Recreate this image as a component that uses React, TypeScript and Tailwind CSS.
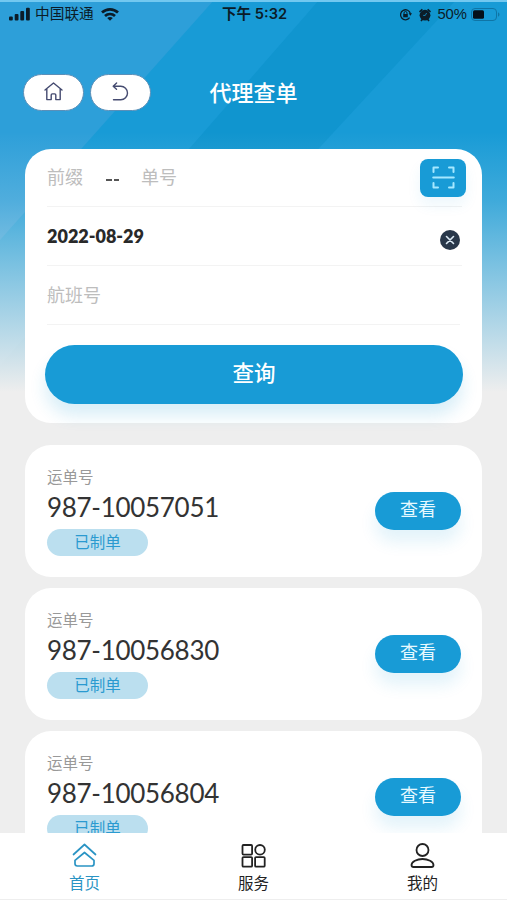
import React from 'react';

interface Waybill {
  prefix: string;
  number: string;
  status: string;
}

const waybills: Waybill[] = [
  { prefix: '987', number: '10057051', status: '已制单' },
  { prefix: '987', number: '10056830', status: '已制单' },
  { prefix: '987', number: '10056804', status: '已制单' },
];

const Backdrop = () => (
  <svg className="absolute inset-x-0 top-0 h-[400px] w-full" viewBox="0 0 507 400" preserveAspectRatio="none">
    <defs>
      <linearGradient id="fade" x1="0" y1="0" x2="0" y2="1">
        <stop offset="0.33" stopColor="#eeeeee" stopOpacity="0" />
        <stop offset="0.5" stopColor="#eeeeee" stopOpacity="0.18" />
        <stop offset="0.65" stopColor="#eeeeee" stopOpacity="0.44" />
        <stop offset="0.85" stopColor="#eeeeee" stopOpacity="0.78" />
        <stop offset="0.98" stopColor="#eeeeee" stopOpacity="1" />
      </linearGradient>
    </defs>
    <rect width="507" height="400" fill="#189bd6" />
    <path d="M0 0H214L0 240Z" fill="#2d9fd9" />
    <path d="M319 0H456L86 400H-30Z" fill="#1095cf" />
    <rect width="507" height="400" fill="url(#fade)" />
    <rect width="507" height="2" fill="#72c8f0" />
  </svg>
);

const StatusBar = () => (
  <div className="grid h-[28px] grid-cols-[1fr_auto_1fr] items-center pt-[1px] pr-[7px] pl-[9px] text-[14px] text-[#0b1c28]">
    <div className="flex items-center">
      <svg className="h-[14px] w-[21px]" viewBox="0 0 21 14" fill="currentColor">
        <rect x="0" y="9.5" width="3.8" height="4" rx="1" />
        <rect x="5.7" y="7" width="3.8" height="6.5" rx="1" />
        <rect x="11.3" y="4" width="3.8" height="9.5" rx="1" />
        <rect x="17" y="0.8" width="3.8" height="12.7" rx="1" />
      </svg>
      <span className="ml-[5px] text-[14.7px]">中国联通</span>
      <svg className="ml-[7px] h-[13px] w-[18px]" viewBox="0 0 18 13" fill="none" stroke="currentColor" strokeWidth="2.7">
        <path d="M1 4.6C5.6.3 12.4.3 17 4.6" />
        <path d="M4 8C6.8 5.3 11.2 5.3 14 8" />
        <path d="M6.2 9.9C7.8 8.6 10.2 8.6 11.8 9.9L9 12.8Z" fill="currentColor" stroke="none" />
      </svg>
    </div>
    <span className="text-[14.6px] font-semibold">下午 5:32</span>
    <div className="flex items-center justify-end">
      <svg className="h-[13px] w-[13px]" viewBox="0 0 13 13" fill="none" stroke="currentColor">
        <path d="M10.6 9.7A5 5 0 1 1 11.4 5.6" strokeWidth="1.3" />
        <path d="M9.7 5.2H13L11.4 7.7Z" fill="currentColor" stroke="none" />
        <rect x="4.2" y="6" width="4.6" height="3.3" fill="currentColor" stroke="none" />
        <path d="M5 6V5A1.5 1.5 0 0 1 8 5V6" />
      </svg>
      <svg className="ml-[7px] h-[14px] w-[12px]" viewBox="0 0 12 14">
        <path d="M0 3.2 2.8.7 4 2.1.9 4.6ZM12 3.2 9.2.7 8 2.1 11.1 4.6Z" fill="currentColor" />
        <path d="m2 13 2-2.4M10 13 8 10.6" stroke="currentColor" strokeWidth="1.6" />
        <circle cx="6" cy="7.2" r="5.4" fill="currentColor" />
        <path d="M6.2 7.5 7.6 5M6.2 7.4H4.2" stroke="#189bd6" strokeWidth="0.8" />
      </svg>
      <span className="ml-[6px] font-['Liberation_Sans'] text-[14.8px]">50%</span>
      <svg className="ml-[4px] h-[13px] w-[29px]" viewBox="0 0 29 13">
        <rect x="0.5" y="0.5" width="25" height="12" rx="3.5" fill="none" stroke="#0f75a6" />
        <rect x="2" y="2.2" width="11" height="8.6" rx="1.5" fill="#051019" />
        <path d="M27 4.3C29 5.2 29 7.8 27 8.7Z" fill="#0f75a6" />
      </svg>
    </div>
  </div>
);

const Header = () => (
  <header className="grid h-[121px] grid-cols-[1fr_auto_1fr] items-start px-[23px] pt-[46px]">
    <div className="flex gap-[6px]">
      <button className="flex h-[37px] w-[61px] items-center justify-center rounded-full border border-[#5b8fb8] bg-white text-[#454b70]">
        <svg className="mb-[2px] h-[19px] w-[19px]" viewBox="0 0 19 19" fill="none" stroke="currentColor" strokeWidth="1.4" strokeLinecap="round" strokeLinejoin="round">
          <path d="M1 8 9.5 1 18 8M2.8 6.7V17.6H7.2V13Q7.2 11.9 8.3 11.9H10.7Q11.8 11.9 11.8 13V17.6H16.2V6.7" />
        </svg>
      </button>
      <button className="flex h-[37px] w-[61px] items-center justify-center rounded-full border border-[#5b8fb8] bg-white text-[#454b70]">
        <svg className="mb-[2px] h-[19px] w-[17px]" viewBox="0 0 17 19" fill="none" stroke="currentColor" strokeWidth="1.4" strokeLinecap="round" strokeLinejoin="round">
          <path d="M4.6 1 1.2 4.3 4.5 7.3M1.5 4.3H8.8A6.7 6.7 0 0 1 8.8 17.7H1.5" />
        </svg>
      </button>
    </div>
    <h1 className="pt-[3px] text-[22px] leading-[32px] font-medium text-white">代理查单</h1>
  </header>
);

const SearchCard = () => (
  <section className="mx-[25px] h-[274px] rounded-[26px] bg-white px-[20px]">
    <div className="ml-[2px] flex h-[58px] items-center border-b border-[#f3f3f3] text-[18px] text-[#bdbdbd]">
      <span className="w-[59px]">前缀</span>
      <span className="flex w-[35px] gap-[2px] pt-[4px]">
        <i className="h-[2px] w-[5.5px] bg-[#555]" />
        <i className="h-[2px] w-[5.5px] bg-[#555]" />
      </span>
      <span>单号</span>
      <button className="mr-[-4px] ml-auto flex h-[38px] w-[46px] items-center justify-center rounded-[8px] bg-[#189bd6] shadow-[0_8px_14px_rgba(24,155,214,0.08)]">
        <svg className="h-[23px] w-[23px]" viewBox="0 0 23 23" fill="none" stroke="#a5e8ff" strokeWidth="2" strokeLinecap="round" strokeLinejoin="round">
          <path d="M1.5 6V1.5H6M17 1.5H21.5V6M1.5 17V21.5H6M17 21.5H21.5V17M1.2 11.5H21.8" />
        </svg>
      </button>
    </div>
    <div className="ml-[2px] flex h-[59px] items-center justify-between border-b border-[#f3f3f3]">
      <span className="font-[Lato] text-[18px] font-extrabold text-[#292929]">2022-08-29</span>
      <svg className="mt-[7px] mr-[2px] h-[20px] w-[20px]" viewBox="0 0 20 20">
        <circle cx="10" cy="10" r="10" fill="#28374a" />
        <path d="M6.5 6.5 13.5 13.5M13.5 6.5 6.5 13.5" stroke="#dceaf5" strokeWidth="1.6" strokeLinecap="round" />
      </svg>
    </div>
    <div className="mr-[2px] ml-[2px] flex h-[59px] items-center border-b border-[#f3f3f3] text-[18px] text-[#bdbdbd]">航班号</div>
    <button className="mt-[20px] h-[59px] w-[418px] rounded-full bg-[#189bd6] pb-[2px] text-[21.5px] font-medium text-white shadow-[0_12px_16px_rgba(24,155,214,0.16)]">
      查询
    </button>
  </section>
);

const WaybillCard: React.FC<{ bill: Waybill }> = ({ bill }) => (
  <li className="flex h-[132px] shrink-0 items-start justify-between rounded-[26px] bg-white pr-[21px] pl-[22px]">
    <div className="pt-[22px]">
      <p className="text-[15.5px] leading-[22px] text-[#999]">运单号</p>
      <p className="font-[Lato] text-[26px] leading-[37px] tracking-[-0.3px] text-[#333]">
        {bill.prefix}-{bill.number}
      </p>
      <span className="mt-[3px] flex h-[27px] w-[101px] items-center justify-center rounded-full bg-[#bbdfef] text-[15.5px] text-[#2a9ad0]">
        {bill.status}
      </span>
    </div>
    <button className="mt-[47px] h-[38px] w-[86px] rounded-full bg-[#189bd6] pb-[3px] text-[18px] text-[#e6f9ff] shadow-[0_12px_16px_rgba(24,155,214,0.12)]">
      查看
    </button>
  </li>
);

const TabBar = () => (
  <nav className="z-10 grid h-[67px] shrink-0 grid-cols-3 border-b border-[#eee] bg-white pt-[10px] text-[15.5px] leading-[22px] text-[#222]">
    <a className="flex flex-col items-center text-[#2a94c4]">
      <svg className="mb-[5px] h-[25px] w-[25px]" viewBox="0 0 25 25" fill="none" stroke="currentColor" strokeWidth="1.7" strokeLinejoin="round" strokeLinecap="round">
        <path d="M1.5 11.5 12.5 1.5 23.5 11.5M12.5 9.5 22 17.3V20.7Q22 23 19.7 23H5.3Q3 23 3 20.7V17.3Z" />
      </svg>
      首页
    </a>
    <a className="flex flex-col items-center">
      <svg className="mb-[5px] h-[25px] w-[25px]" viewBox="0 0 25 25" fill="none" stroke="currentColor" strokeWidth="1.8">
        <rect x="1.5" y="2" width="9.6" height="9.6" rx="1" />
        <circle cx="19" cy="6.8" r="4.8" />
        <rect x="1.5" y="14.1" width="9.6" height="9.6" rx="1" />
        <rect x="14.1" y="14.1" width="9.6" height="9.6" rx="1" />
      </svg>
      服务
    </a>
    <a className="flex flex-col items-center">
      <svg className="mb-[5px] h-[25px] w-[25px]" viewBox="0 0 25 25" fill="none" stroke="currentColor" strokeWidth="1.8">
        <circle cx="12.5" cy="7" r="6" />
        <path d="M12.5 16C18 16 23.5 18.5 23.5 22Q23.5 24 21.5 24H3.5Q1.5 24 1.5 22C1.5 18.5 7 16 12.5 16Z" />
      </svg>
      我的
    </a>
  </nav>
);

export default function App() {
  return (
    <div className="relative flex h-[900px] w-full flex-col overflow-hidden bg-[#eeeeee] font-['Inter','Noto_Sans_CJK_SC',sans-serif]">
      <Backdrop />
      <main className="relative min-h-0 flex-1 overflow-hidden">
        <StatusBar />
        <Header />
        <SearchCard />
        <ul className="mx-[25px] mt-[22px] flex flex-col gap-[11px]">
          {waybills.map((bill) => (
            <WaybillCard key={bill.number} bill={bill} />
          ))}
        </ul>
      </main>
      <TabBar />
    </div>
  );
}
